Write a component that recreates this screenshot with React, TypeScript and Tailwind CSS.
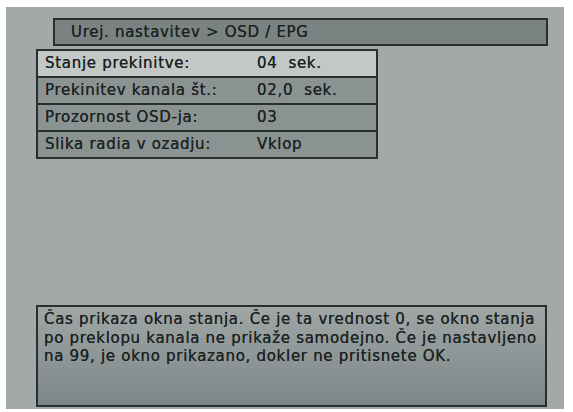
const rows = [
  { label: 'Stanje prekinitve:', value: '04  sek.', active: true },
  { label: 'Prekinitev kanala št.:', value: '02,0  sek.' },
  { label: 'Prozornost OSD-ja:', value: '03' },
  { label: 'Slika radia v ozadju:', value: 'Vklop' },
]

export default function App() {
  return (
    <div className="w-[573px] h-[412px] bg-white pt-[7px] pl-[6px]"
      style={{ fontFamily: '"DejaVu Sans", "Liberation Sans", sans-serif' }}>
      <div className="w-[558px] h-[402px] bg-[#a3a9a8] flex flex-col text-[#1c2322] text-[15px] tracking-[0.7px] [text-shadow:0_0_0.6px_#1c2322] overflow-hidden">
        {/* title bar */}
        <div className="ml-[47px] mt-[11px] w-[495px] h-[28px] bg-[#7b8382] border-2 border-[#27302f] flex items-center pl-[16px]">
          Urej. nastavitev &gt; OSD / EPG
        </div>

        {/* settings table */}
        <div className="ml-[30px] mt-[3px] w-[342px] border-2 border-[#27302f] flex flex-col bg-[#27302f] gap-[2px]">
          {rows.map(r => (
            <div key={r.label}
              className={`h-[25px] flex items-center pl-[7px] whitespace-pre ${r.active ? 'bg-[#c3c8c7]' : 'bg-[#8b9392]'}`}>
              <span className="w-[212px]">{r.label}</span>
              <span>{r.value}</span>
            </div>
          ))}
        </div>

        {/* help text */}
        <div className="ml-[30px] mt-[146px] w-[511px] h-[102px] border-2 border-[#27302f] bg-gradient-to-b from-[#a0a6a6] to-[#7d8687] pl-[6px] pt-[3px] leading-[18.5px] whitespace-nowrap">
          <div>Čas prikaza okna stanja. Če je ta vrednost 0, se okno stanja</div>
          <div>po preklopu kanala ne prikaže samodejno. Če je nastavljeno</div>
          <div>na 99, je okno prikazano, dokler ne pritisnete OK.</div>
        </div>
      </div>
    </div>
  )
}
